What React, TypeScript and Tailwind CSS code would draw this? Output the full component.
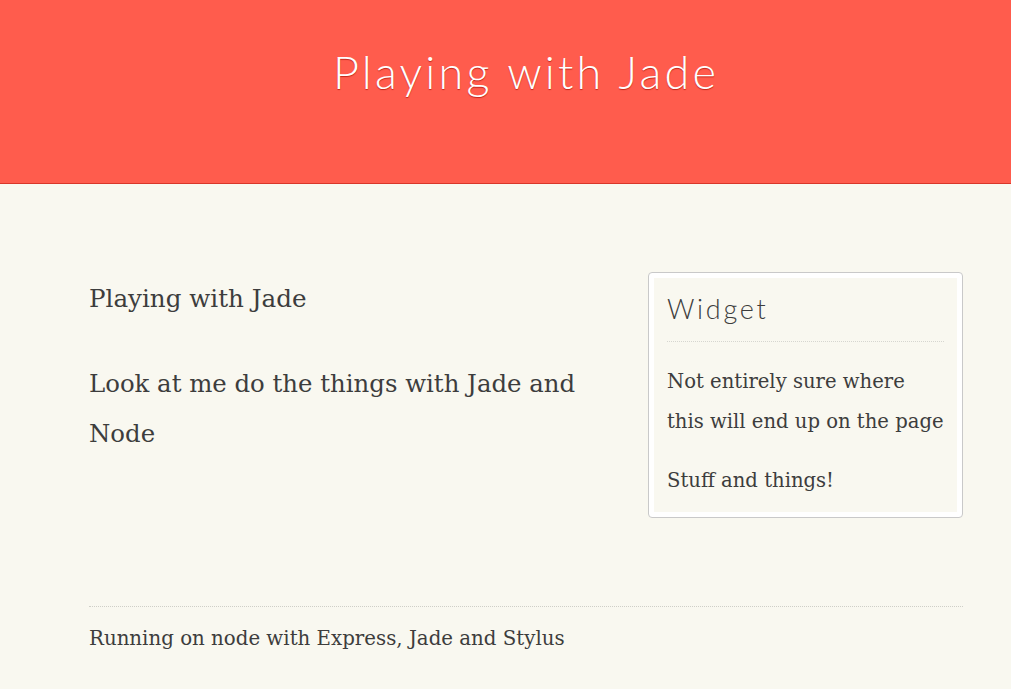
import React from 'react';

const serif = { fontFamily: '"DejaVu Serif", Georgia, serif' };

const Widget: React.FC = () => (
  <aside className="w-[315px] shrink-0 rounded-[4px] border border-[#c9c9c9] bg-white p-[5px]">
    <div className="bg-[#f9f8f0] px-[13px] pt-[11px] pb-[11px]">
      <h3 className="font-['Lato',sans-serif] text-[27px] font-light leading-[40px] tracking-[2.7px] text-[#3d3d3d]">Widget</h3>
      <div className="mt-[12px] border-t border-dotted border-[#d6d6d0]" />
      <div className="mt-[20px] text-[19.6px] leading-[40px] text-[#3d3d3d]" style={serif}>
        <p>Not entirely sure where this will end up on the page</p>
        <p className="mt-[19px]">Stuff and things!</p>
      </div>
    </div>
  </aside>
);

export default function App() {
  return (
    <div className="min-h-[689px] bg-[#f9f8f0]">
      <header className="h-[184px] border-b border-[#d8372a] bg-[#ff5c4d]">
        <div className="ml-[89px] w-[874px] pt-[46px] text-center">
          <h1 className="font-['Lato',sans-serif] text-[45px] font-light leading-[52px] tracking-[3.2px] text-white [text-shadow:0_1px_1px_#c0271b]">
            Playing with Jade
          </h1>
        </div>
      </header>

      <main className="ml-[89px] flex w-[874px] justify-between pt-[88px]">
        <div className="w-[510px] text-[#3d3d3d]" style={serif}>
          <h2 className="pt-[12px] text-[24.6px] leading-[30px]">Playing with Jade</h2>
          <p className="mt-[45px] text-[24.4px] leading-[50px]">Look at me do the things with Jade and Node</p>
        </div>
        <Widget />
      </main>

      <footer className="ml-[89px] mt-[88px] w-[874px] border-t border-dotted border-[#cfcfc8] pt-[17px]">
        <p className="text-[19.8px] leading-[30px] text-[#3d3d3d]" style={serif}>Running on node with Express, Jade and Stylus</p>
      </footer>
    </div>
  );
}
